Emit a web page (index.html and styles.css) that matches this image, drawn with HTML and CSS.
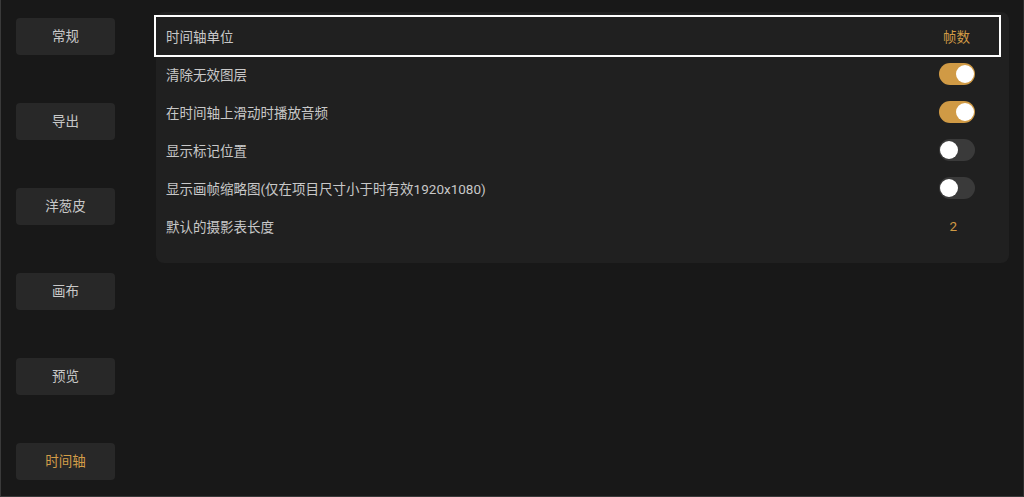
FILE: index.html
```html
<!DOCTYPE html>
<html>
<head>
    <meta charset="UTF-8">
    <title>设置</title>
    <link rel="stylesheet" href="styles.css">
</head>
<body>
    <div class="app">
        <ul class="side">
            <li>常规</li>
            <li>导出</li>
            <li>洋葱皮</li>
            <li>画布</li>
            <li>预览</li>
            <li class="active">时间轴</li>
        </ul>
        <div class="panel">
            <div class="row focus">
                <span class="label">时间轴单位</span>
                <span class="value">帧数</span>
            </div>
            <div class="row">
                <span class="label">清除无效图层</span>
                <span class="switch on"></span>
            </div>
            <div class="row">
                <span class="label">在时间轴上滑动时播放音频</span>
                <span class="switch on"></span>
            </div>
            <div class="row">
                <span class="label">显示标记位置</span>
                <span class="switch"></span>
            </div>
            <div class="row">
                <span class="label">显示画帧缩略图(仅在项目尺寸小于时有效1920x1080)</span>
                <span class="switch"></span>
            </div>
            <div class="row">
                <span class="label">默认的摄影表长度</span>
                <span class="value num">2</span>
            </div>
        </div>
    </div>
</body>
</html>
```

FILE: styles.css
```css
* {
    margin: 0;
    padding: 0;
    box-sizing: border-box;
}
body {
    background-color: #181818;
    font-family: Roboto, "Noto Sans CJK SC", sans-serif;
    font-size: 13.5px;
    color: #c8c8c8;
}
ul, li {
    list-style: none;
}
.app {
    display: flex;
    height: 497px;
    border-left: 1px solid #3a3a3a;
    border-right: 1px solid #2c2c2c;
    border-bottom: 1px solid #3a3a3a;
}
.side {
    display: flex;
    flex-direction: column;
    gap: 48px;
    padding: 18px 0 0 15px;
}
.side li {
    width: 99px;
    height: 37px;
    line-height: 37px;
    text-align: center;
    background-color: #282828;
    border-radius: 4px;
}
.side li.active {
    color: #d29d48;
}
.panel {
    align-self: flex-start;
    width: 853px;
    margin: 12px 0 0 41px;
    padding: 5px 10px 18px 0;
    background-color: #202020;
    border-radius: 8px;
}
.row {
    display: flex;
    align-items: center;
    justify-content: space-between;
    height: 38px;
    padding: 0 24px 0 10px;
}
.row.focus {
    outline: 2px solid #ffffff;
    padding-right: 29px;
}
.value {
    color: #d09a45;
}
.value.num {
    padding-right: 18px;
}
.switch {
    position: relative;
    width: 36px;
    height: 22px;
    border-radius: 11px;
    background-color: #3a3a3a;
}
.switch:after {
    content: "";
    position: absolute;
    top: 2px;
    left: 1px;
    width: 18px;
    height: 18px;
    border-radius: 50%;
    background-color: #ffffff;
}
.switch.on {
    background-color: #d09a45;
}
.switch.on:after {
    left: 17px;
}
```
